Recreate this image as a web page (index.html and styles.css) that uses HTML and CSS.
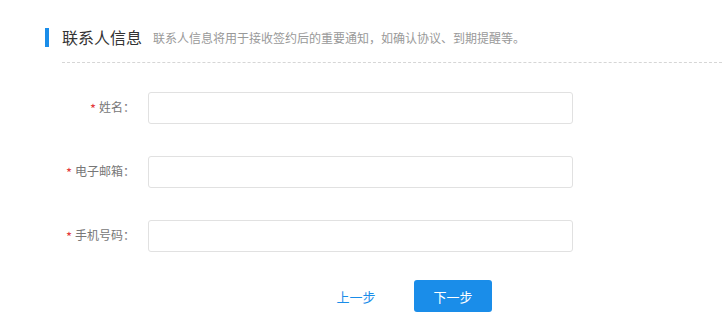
FILE: index.html
```html
<!DOCTYPE html>
<html lang="zh-CN">
<head>
  <meta charset="UTF-8" />
  <title>联系人信息</title>
  <link rel="stylesheet" href="styles.css">
</head>
<body>
  <div class="panel">
    <div class="section-head">
      <span class="bar"></span>
      <h2>联系人信息</h2>
      <span class="tip">联系人信息将用于接收签约后的重要通知，如确认协议、到期提醒等。</span>
    </div>
    <div class="divider"></div>

    <form class="form">
      <div class="form-row">
        <label class="label"><i>*</i>姓名：</label>
        <input type="text" class="field" />
      </div>
      <div class="form-row">
        <label class="label"><i>*</i>电子邮箱：</label>
        <input type="text" class="field" />
      </div>
      <div class="form-row">
        <label class="label"><i>*</i>手机号码：</label>
        <input type="text" class="field" />
      </div>

      <div class="actions">
        <button type="button" class="btn btn-link">上一步</button>
        <button type="button" class="btn btn-primary">下一步</button>
      </div>
    </form>
  </div>
</body>
</html>
```

FILE: styles.css
```css
:root {
  --blue: #1a8de9;
  --text-color: #333;
  --muted: #999;
  --label: #777;
  --border: #e1e1e1;
  --star: #e4393c;
}

body {
  margin: 0;
  background: #fff;
  font-family: "Noto Sans CJK SC", "Microsoft YaHei", sans-serif;
  color: var(--text-color);
}

.panel {
  padding-top: 28px;
}

.section-head {
  display: flex;
  align-items: center;
  padding-left: 45px;
  height: 19px;
}

.bar {
  width: 4px;
  height: 19px;
  background: var(--blue);
  margin-right: 13px;
}

.section-head h2 {
  margin: 0;
  font-size: 16px;
  font-weight: normal;
  color: var(--text-color);
  line-height: 19px;
}

.tip {
  margin-left: 11px;
  font-size: 12px;
  color: var(--muted);
  line-height: 19px;
}

.divider {
  margin: 15px 0 0 62px;
  border-top: 1px dashed #d6d6d6;
}

.form {
  padding-top: 29px;
}

.form-row {
  display: flex;
  align-items: center;
  margin-bottom: 32px;
}

.label {
  width: 135px;
  text-align: right;
  font-size: 12px;
  color: var(--label);
  margin-right: 13px;
}

.label i {
  font-style: normal;
  font-size: 13px;
  color: var(--star);
  margin-right: 3px;
  vertical-align: -2px;
}

.field {
  width: 425px;
  height: 32px;
  box-sizing: border-box;
  border: 1px solid var(--border);
  border-radius: 3px;
  padding: 0 10px;
  font-size: 12px;
  outline: none;
}

.actions {
  display: flex;
  margin-top: -4px;
  padding-left: 317px;
  gap: 19px;
}

.btn {
  width: 78px;
  height: 32px;
  border: none;
  border-radius: 3px;
  font-family: inherit;
  font-size: 13px;
  cursor: pointer;
}

.btn-link {
  background: none;
  color: var(--blue);
}

.btn-primary {
  background: var(--blue);
  color: #fff;
}
```
